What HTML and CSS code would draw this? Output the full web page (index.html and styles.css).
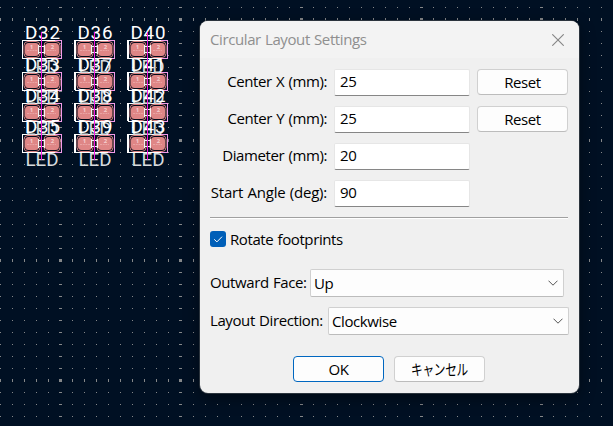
FILE: index.html
```html
<!DOCTYPE html>
<html lang="en">
<head>
<meta charset="utf-8">
<title>Circular Layout Settings</title>
<link rel="stylesheet" href="styles.css">
</head>
<body>
<svg class="board" width="613" height="426" viewBox="0 0 613 426">
  <defs>
    <g id="tile" fill="#858789" shape-rendering="crispEdges">
      <path d="M0 0h1v1h-1zM12 0h1v1h-1zM24 0h1v1h-1zM36 0h1v1h-1zM48 0h1v1h-1zM59 0h3v1h-3zM72 0h1v1h-1zM84 0h1v1h-1zM96 0h1v1h-1zM108 0h1v1h-1z"/>
    </g>
    <pattern id="grid" width="120" height="120" patternUnits="userSpaceOnUse">
      <use href="#tile" y="8"/><use href="#tile" y="32"/><use href="#tile" y="44"/><use href="#tile" y="56"/><use href="#tile" y="68"/>
      <use href="#tile" y="80"/><use href="#tile" y="92"/><use href="#tile" y="104"/><use href="#tile" y="116"/>
      <use href="#tile" y="19"/><use href="#tile" y="20"/><use href="#tile" y="21"/>
    </pattern>
    <g id="pads">
      <g shape-rendering="crispEdges">
        <path d="M4 .5H-18.500V18.500H4" fill="none" stroke="#fff"/>
        <path d="M4 .5H20.500V18.500H4" fill="none" stroke="#f39be9"/>
        <path d="M4 .5H14M4 18.500H14" stroke="#fff"/>
      </g>
      <rect x="-17" y="1.500" width="16" height="16" rx="4" fill="#000a19" stroke="#d98181"/>
      <rect x="3" y="1.500" width="16" height="16" rx="4" fill="#000a19" stroke="#d98181"/>
      <rect x="-16" y="3" width="14" height="13" rx="3.500" fill="#df8686"/>
      <rect x="4" y="3" width="14" height="13" rx="3.500" fill="#df8686"/>
      <path d="M-2.500 5v9M3.500 5v9M-2 6.500H4M-2 12.500H4" stroke="#f3f3f5" fill="none"/>
      <path d="M-14 10.500H-4M6 10.500H15" stroke="#efb0b0" stroke-width=".7" stroke-dasharray="2 .7"/>
      <text class="pin" x="-9.500" y="8.500">1</text>
      <text class="pin" x="11.500" y="8.500">2</text>
    </g>
    <g id="column">
      <use href="#pads" y="40"/>
      <use href="#pads" y="72"/>
      <use href="#pads" y="103"/>
      <use href="#pads" y="134"/>
      <g class="value">
        <text x="-15.500" y="72.500" textLength="33">LED</text>
        <text x="-15.500" y="103.500" textLength="33">LED</text>
        <text x="-15.500" y="135" textLength="33">LED</text>
        <text x="-15.500" y="166" textLength="33">LED</text>
      </g>
    </g>
  </defs>
  <svg width="187" height="134"><rect x="0" y="-1" width="187" height="137" fill="url(#grid)" transform="translate(0 -1)"/></svg>
  <svg x="187" width="426" height="134" viewBox="187 0 426 134"><rect x="180" width="440" height="140" fill="url(#grid)" transform="translate(1 -1)"/></svg>
  <svg y="134" width="187" height="292" viewBox="0 134 187 292"><rect y="130" width="187" height="300" fill="url(#grid)"/></svg>
  <svg x="187" y="134" width="426" height="292" viewBox="187 134 426 292"><rect x="180" y="130" width="440" height="300" fill="url(#grid)" transform="translate(1 0)"/></svg>
  <use href="#column" x="41"/>
  <use href="#column" x="94"/>
  <use href="#column" x="147"/>
  <path d="M74.500 40V153M127.500 40V153" stroke="#fff" stroke-dasharray="19 13 18 13 18 13 19"/>
  <g class="ref">
    <text x="25" y="39" textLength="35">D32</text><text x="25" y="71" textLength="35">D33</text><text x="25" y="102" textLength="35">D34</text><text x="25" y="133" textLength="35">D35</text>
    <text x="77.500" y="39" textLength="35">D36</text><text x="77.500" y="71" textLength="35">D37</text><text x="77.500" y="102" textLength="35">D38</text><text x="77.500" y="133" textLength="35">D39</text>
    <text x="130.500" y="39" textLength="35">D40</text><text x="130.500" y="71" textLength="35">D41</text><text x="130.500" y="102" textLength="35">D42</text><text x="130.500" y="133" textLength="35">D43</text>
  </g>
  <path d="M41.500 32V160M94.500 32V160M147.500 32V160" stroke="#f51be3"/>
</svg>

<form class="dialog">
  <header class="titlebar">
    <h1 class="title">Circular Layout Settings</h1>
    <svg class="close" width="12" height="12" viewBox="0 0 12 12"><path d="M.3.3 11.700 11.700M11.700.3.3 11.700"/></svg>
  </header>
  <div class="content">
    <div class="fields">
      <label class="cx" for="cx">Center X (mm):</label><input id="cx" value="25"><button type="button">Reset</button>
      <label class="cy" for="cy">Center Y (mm):</label><input id="cy" value="25"><button type="button">Reset</button>
      <label class="dia" for="dia">Diameter (mm):</label><input id="dia" value="20"><span></span>
      <label class="angle" for="angle">Start Angle (deg):</label><input id="angle" value="90"><span></span>
    </div>
    <div class="separator"></div>
    <div class="check">
      <svg width="16" height="16" viewBox="0 0 16 16"><rect width="16" height="16" rx="3" fill="#005fb8"/><path d="M4.200 8.300 6.900 10.900 12 5.700" fill="none" stroke="#fff"/></svg>
      <span>Rotate footprints</span>
    </div>
    <div class="choice face">
      <span>Outward Face:</span>
      <div class="select"><span>Up</span><svg width="10" height="6" viewBox="0 0 10 6"><path d="M.5.700 5 5.200 9.500.700"/></svg></div>
    </div>
    <div class="choice direction">
      <span>Layout Direction:</span>
      <div class="select"><span>Clockwise</span><svg width="10" height="6" viewBox="0 0 10 6"><path d="M.5.700 5 5.200 9.500.700"/></svg></div>
    </div>
    <div class="actions">
      <button type="button" class="default">OK</button>
      <button type="button" class="cancel"><span>キャンセル</span></button>
    </div>
  </div>
</form>
</body>
</html>
```
FILE: styles.css
```css
* { box-sizing: border-box; }
body {
  margin: 0;
  width: 613px;
  height: 426px;
  overflow: hidden;
  background: #001023;
  padding: 21px 0 0 200px;
  font: 15px/20px "Open Sans", "Noto Sans CJK JP", sans-serif;
  letter-spacing: -.4px;
  word-spacing: .7px;
  color: #000;
}
.board { position: absolute; left: 0; top: 0; letter-spacing: 0; word-spacing: 0; }
.pin { font: 700 6px "Open Sans", sans-serif; fill: #f6cfcf; text-anchor: middle; }
.ref, .value { font: 18.8px Roboto, sans-serif; }
.ref { fill: #fff; }
.value { fill: #d8dbde; }

.dialog {
  position: relative;
  width: 379px;
  height: 372px;
  border-radius: 8px;
  overflow: hidden;
  background: #f0f0f0;
  box-shadow: 0 0 0 1px #2b343d, 0 5px 16px rgba(0, 0, 0, .45);
}
.titlebar {
  display: flex;
  justify-content: space-between;
  align-items: center;
  height: 37px;
  padding: 0 15px 0 10px;
  background: #f3f3f3;
}
.title { margin: 0; padding-bottom: 2px; font-size: 15px; font-weight: 400; color: #8f8f8f; }
.close path { stroke: #858585; stroke-width: 1.1; fill: none; }
.content { padding: 11px 10px 0; }
.fields {
  display: grid;
  grid-template-columns: 117px 136px 91px;
  grid-auto-rows: 27px;
  column-gap: 7px;
  row-gap: 10px;
}
.fields label { justify-self: end; line-height: 25px; white-space: nowrap; }
.fields .angle { letter-spacing: -.22px; }
.fields input {
  width: 136px;
  height: 27px;
  border: 1px solid #e6e6e6;
  border-bottom-color: #868686;
  border-radius: 2px;
  background: #fff;
  padding: 0 5px 3px;
  font: inherit;
  letter-spacing: inherit;
  color: #000;
}
button {
  width: 91px;
  height: 26px;
  padding: 0 0 1px;
  border: 1px solid #d0d0d0;
  border-bottom-color: #bcbcbc;
  border-radius: 4px;
  background: #fdfdfd;
  font: inherit;
  letter-spacing: inherit;
  color: #000;
}
.separator { width: 358px; height: 2px; margin-top: 10px; background: #a0a0a0; border-bottom: 1px solid #fff; }
.check { display: flex; align-items: center; gap: 4px; height: 20px; margin-top: 10px; }
.choice { display: flex; justify-content: space-between; align-items: center; height: 28px; white-space: nowrap; }
.choice > span { padding-bottom: 2px; }
.face { width: 354px; margin-top: 20px; }
.direction { width: 359px; margin-top: 10px; }
.select {
  display: flex;
  justify-content: space-between;
  align-items: center;
  width: 254px;
  height: 28px;
  padding: 0 5px 0 3px;
  border: 1px solid #d0d0d0;
  border-bottom-color: #bcbcbc;
  border-radius: 2px;
  background: #fdfdfd;
}
.direction .select { width: 241px; }
.select svg path { fill: none; stroke: #555; }
.actions { display: flex; gap: 10px; margin: 21px 0 0 83px; }
.actions .default { border-color: #0067c0; }
.cancel span { display: inline-block; transform: scaleX(.78); margin: 0 -10px; }
```
